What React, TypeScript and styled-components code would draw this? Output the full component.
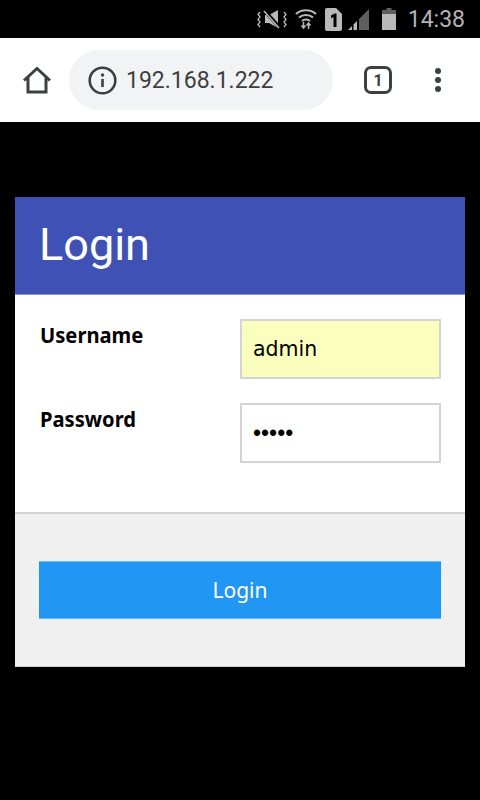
import styled, { createGlobalStyle } from "styled-components";

const GlobalStyle = createGlobalStyle`
  html, body {
    margin: 0;
    padding: 0;
    background: #000;
  }
  * {
    box-sizing: border-box;
  }
`;

const Screen = styled.div`
  width: 480px;
  height: 800px;
  background: #000;
  overflow: hidden;
`;

const StatusBar = styled.div`
  height: 38px;
  display: flex;
  align-items: center;
  justify-content: flex-end;
  padding-right: 15px;
  color: #b9b9b9;
`;

const StatusIcon = styled.svg<{ $gap?: number }>`
  display: block;
  flex: none;
  margin-left: ${(props) => props.$gap ?? 0}px;
`;

const Clock = styled.span`
  font-family: Roboto, sans-serif;
  font-size: 23px;
  margin-left: 12px;
  color: #b4b4b4;
`;

const BrowserBar = styled.div`
  height: 84px;
  background: #fff;
  display: flex;
  align-items: center;
  padding: 0 0 0 22px;
`;

const HomeIcon = styled.svg`
  width: 30px;
  height: 28px;
  flex: none;
  margin-right: 17px;
`;

const UrlPill = styled.div`
  width: 264px;
  height: 60px;
  border-radius: 30px;
  background: #f1f3f4;
  display: flex;
  align-items: center;
  padding-left: 19px;
`;

const InfoIcon = styled.svg`
  width: 29px;
  height: 29px;
  flex: none;
  margin-right: 9px;
`;

const UrlText = styled.span`
  font-family: Roboto, sans-serif;
  font-size: 23px;
  color: #3c4043;
`;

const TabCount = styled.div`
  width: 28px;
  height: 28px;
  margin-left: 31px;
  border: 3px solid #3c4043;
  border-radius: 7px;
  display: flex;
  align-items: center;
  justify-content: center;
  font-family: Roboto, sans-serif;
  font-size: 16px;
  font-weight: 700;
  color: #3c4043;
  flex: none;
`;

const MenuDots = styled.div`
  margin-left: 43px;
  display: flex;
  flex-direction: column;
  gap: 3px;
`;

const Dot = styled.span`
  width: 6px;
  height: 6px;
  border-radius: 50%;
  background: #3c4043;
`;

const Main = styled.main`
  padding: 75px 15px 0;
`;

const Card = styled.form`
  background: #fff;
  border-bottom: 1px solid #ccc;
`;

const CardHeader = styled.header`
  height: 98px;
  background: #3f51b5;
  border-bottom: 1px solid #8c97d3;
  display: flex;
  align-items: center;
  padding: 0 24px 3px;
`;

const Title = styled.h1`
  margin: 0;
  font-family: Roboto, sans-serif;
  font-size: 45px;
  font-weight: 400;
  color: #fff;
`;

const Fields = styled.div`
  padding: 24px 24px 0;
  height: 219px;
  display: flex;
  flex-direction: column;
  gap: 24px;
  border-bottom: 2px solid #d4d4d4;
`;

const Row = styled.div`
  display: flex;
  justify-content: space-between;
  align-items: flex-start;
`;

const Label = styled.label`
  margin-left: 1px;
  font-family: "Noto Sans", "Open Sans", sans-serif;
  font-size: 21px;
  font-weight: 700;
  line-height: 32px;
  color: #000;
  transform: scaleX(0.96);
  transform-origin: left center;
`;

const Input = styled.input<{ $filled?: boolean }>`
  width: 201px;
  height: 60px;
  padding: 0 11px;
  border: 2px solid #d4d4d4;
  border-radius: 0;
  outline: none;
  background: ${(props) => (props.$filled ? "#faffbd" : "#fff")};
  font-family: ${(props) =>
    props.type === "password" ? '"Liberation Sans"' : '"DejaVu Sans"'}, sans-serif;
  font-size: ${(props) => (props.type === "password" ? "23px" : "20.5px")};
  color: #000;
`;

const Footer = styled.div`
  height: 152px;
  background: #f0f0f0;
  padding: 47px 24px 0;
`;

const SubmitButton = styled.button`
  display: block;
  width: 100%;
  height: 58px;
  padding: 0;
  border: none;
  border-top: 1px solid #6cb9f7;
  border-bottom: 1px solid #6cb9f7;
  background: #2196f3;
  font-family: "Noto Sans", "Open Sans", sans-serif;
  font-size: 21px;
  color: #fff;
  text-align: center;
`;

export default function App() {
  return (
    <>
      <GlobalStyle />
      <Screen>
        <StatusBar>
          <StatusIcon width="30" height="20" viewBox="0 0 30 20" fill="none">
            <path d="M8 6h4l9-5v18l-9-5H8z" fill="#b9b9b9" />
            <path d="M7 1l16 18" stroke="#000" strokeWidth="3.5" />
            <path d="M7 2l15 17" stroke="#b9b9b9" strokeWidth="1.5" />
            <path
              d="M3 3l-2 2.500 2 2.500-2 2.500 2 2.500-2 2.500 2 2.500M27 3l2 2.500-2 2.500 2 2.500-2 2.500 2 2.500-2 2.500"
              stroke="#b9b9b9"
              strokeWidth="1.300"
            />
          </StatusIcon>
          <StatusIcon $gap={8} width="22" height="24" viewBox="0 0 22 24" fill="none">
            <path
              d="M1 7c5.500-5 14.500-5 20 0M4 10.500c3.800-3.500 10.200-3.500 14 0M7 14c2.200-2 5.800-2 8 0"
              stroke="#b9b9b9"
              strokeWidth="2"
            />
            <path
              d="M8.500 15v6M6.500 18.500l2 2.500 2-2.500M13.500 22v-6M11.500 18.500l2-2.500 2 2.500"
              stroke="#b9b9b9"
              strokeWidth="1.500"
            />
          </StatusIcon>
          <StatusIcon $gap={8} width="17" height="23" viewBox="0 0 17 23">
            <path
              d="M2 0h9l6 6v15a2 2 0 0 1-2 2H2a2 2 0 0 1-2-2V2a2 2 0 0 1 2-2z"
              fill="#b9b9b9"
            />
            <path d="M6 7.500l3.500-2H11.500V19H8.500V9l-2.500 1.200z" fill="#000" />
          </StatusIcon>
          <StatusIcon $gap={6} width="21" height="21" viewBox="0 0 21 21">
            <path d="M0 21L4 17V21z" fill="#b9b9b9" />
            <path d="M5.500 15.500L9 12V21H5.500z" fill="#b9b9b9" />
            <path d="M11 10L21 0V21H11z" fill="#5f5f5f" />
          </StatusIcon>
          <StatusIcon $gap={13} width="14" height="22" viewBox="0 0 14 22">
            <path d="M4.500 0h5v2h4.500v4H0V2h4.500z" fill="#5f5f5f" />
            <path d="M0 6h14v16H0z" fill="#b9b9b9" />
          </StatusIcon>
          <Clock>14:38</Clock>
        </StatusBar>

        <BrowserBar>
          <HomeIcon viewBox="0 0 30 28" fill="none">
            <path
              d="M2 14.500L15 2.500l13 12M6 11.500V26h18V11.500"
              stroke="#3c4043"
              strokeWidth="3"
            />
          </HomeIcon>
          <UrlPill>
            <InfoIcon viewBox="0 0 29 29" fill="none">
              <circle cx="14.500" cy="14.500" r="12.800" stroke="#3c4043" strokeWidth="2.600" />
              <path d="M14.500 13v8" stroke="#3c4043" strokeWidth="2.600" />
              <circle cx="14.500" cy="9" r="1.700" fill="#3c4043" />
            </InfoIcon>
            <UrlText>192.168.1.222</UrlText>
          </UrlPill>
          <TabCount>1</TabCount>
          <MenuDots>
            <Dot />
            <Dot />
            <Dot />
          </MenuDots>
        </BrowserBar>

        <Main>
          <Card onSubmit={(e) => e.preventDefault()}>
            <CardHeader>
              <Title>Login</Title>
            </CardHeader>
            <Fields>
              <Row>
                <Label htmlFor="username">Username</Label>
                <Input id="username" $filled defaultValue="admin" />
              </Row>
              <Row>
                <Label htmlFor="password">Password</Label>
                <Input id="password" type="password" defaultValue="admin" />
              </Row>
            </Fields>
            <Footer>
              <SubmitButton type="submit">Login</SubmitButton>
            </Footer>
          </Card>
        </Main>
      </Screen>
    </>
  );
}
